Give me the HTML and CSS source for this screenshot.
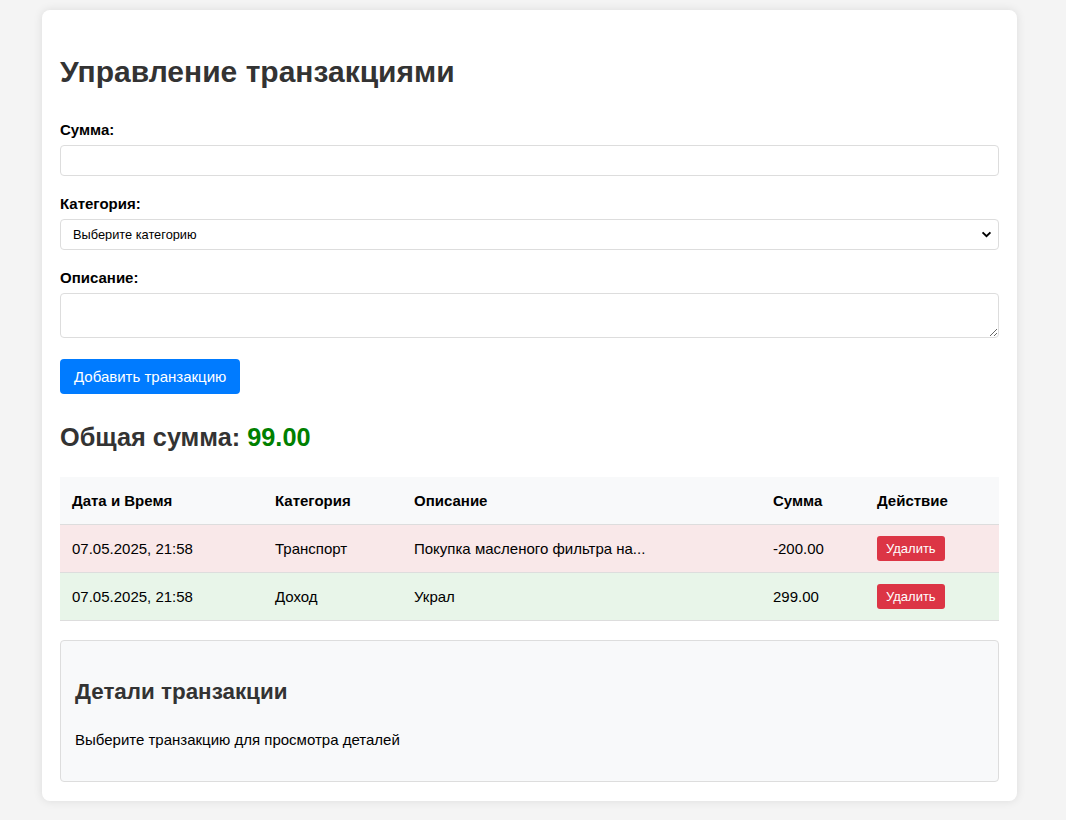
FILE: index.html
```html
<!DOCTYPE html>
<html lang="ru">
<head>
<meta charset="utf-8">
<title>Управление транзакциями</title>
<link rel="stylesheet" href="styles.css">
</head>
<body>
<div class="container">
  <h1 class="title">Управление транзакциями</h1>
  <form class="tx-form">
    <div class="form-group">
      <label class="label" for="amount">Сумма:</label>
      <input class="field" id="amount" type="text">
    </div>
    <div class="form-group">
      <label class="label" for="category">Категория:</label>
      <select class="field select" id="category">
        <option>Выберите категорию</option>
      </select>
    </div>
    <div class="form-group">
      <label class="label" for="desc">Описание:</label>
      <textarea class="field textarea" id="desc"></textarea>
    </div>
    <button class="btn-add" type="button">Добавить транзакцию</button>
  </form>

  <h2 class="total">Общая сумма: <span class="total-value">99.00</span></h2>

  <table class="tx-table">
    <thead>
      <tr>
        <th class="c-date">Дата и Время</th>
        <th class="c-cat">Категория</th>
        <th class="c-desc">Описание</th>
        <th class="c-sum">Сумма</th>
        <th class="c-act">Действие</th>
      </tr>
    </thead>
    <tbody>
      <tr class="row-expense">
        <td>07.05.2025, 21:58</td>
        <td>Транспорт</td>
        <td>Покупка масленого фильтра на...</td>
        <td>-200.00</td>
        <td><button class="btn-del" type="button">Удалить</button></td>
      </tr>
      <tr class="row-income">
        <td>07.05.2025, 21:58</td>
        <td>Доход</td>
        <td>Украл</td>
        <td>299.00</td>
        <td><button class="btn-del" type="button">Удалить</button></td>
      </tr>
    </tbody>
  </table>

  <div class="details">
    <h3 class="details-title">Детали транзакции</h3>
    <p class="details-text">Выберите транзакцию для просмотра деталей</p>
  </div>
</div>
</body>
</html>
```

FILE: styles.css
```css
html, body {
  margin: 0;
  padding: 0;
}
body {
  background: #f4f4f4;
  font-family: "Liberation Sans", Arial, sans-serif;
  font-size: 15px;
  color: #000;
}
.container {
  width: 975px;
  box-sizing: border-box;
  margin: 10px 0 19px 42px;
  padding: 18px 18px 19px;
  background: #fff;
  border-radius: 8px;
  box-shadow: 0 0 10px rgba(0, 0, 0, 0.1);
}
.title {
  color: #333;
  font-size: 30px;
  font-weight: bold;
  margin: 27px 0 32px;
  line-height: 34px;
}
.tx-form {
  margin: 0;
}
.form-group {
  margin-bottom: 19px;
}
.label {
  display: block;
  font-size: 15px;
  font-weight: bold;
  line-height: 17px;
  margin-bottom: 7px;
}
.field {
  display: block;
  width: 100%;
  box-sizing: border-box;
  padding: 8px;
  border: 1px solid #ddd;
  border-radius: 4px;
  font-family: "Liberation Sans", Arial, sans-serif;
  font-size: 12.8px;
  line-height: 13px;
  height: 31px;
  background: #fff;
  color: #000;
}
.select {
  padding: 0 12px;
  appearance: none;
  -webkit-appearance: none;
  background-image: url("data:image/svg+xml;utf8,<svg xmlns='http://www.w3.org/2000/svg' width='12' height='8' viewBox='0 0 12 8'><path d='M1.5 1.5 L6 6 L10.5 1.5' fill='none' stroke='black' stroke-width='2.2'/></svg>");
  background-repeat: no-repeat;
  background-position: right 6px center;
  background-size: 11px 7px;
}
.textarea {
  height: 45px;
  resize: vertical;
  margin-bottom: 21px;
}
.form-group:last-of-type {
  margin-bottom: 0;
}
.btn-add {
  display: block;
  background: #007bff;
  color: #fff;
  border: none;
  border-radius: 4px;
  padding: 0 14px;
  height: 35px;
  font-family: "Liberation Sans", Arial, sans-serif;
  font-size: 15px;
}
.total {
  color: #333;
  font-size: 25.3px;
  font-weight: bold;
  margin: 29px 0 25px;
  line-height: 29px;
}
.total-value {
  color: green;
}
.tx-table {
  width: 100%;
  border-collapse: collapse;
  font-size: 15px;
}
.tx-table th,
.tx-table td {
  text-align: left;
  padding: 0 12px;
  border-bottom: 1px solid #ddd;
  height: 47px;
}
.tx-table th {
  background: #f8f9fa;
  font-weight: bold;
}
.c-date { width: 179px; }
.c-cat { width: 115px; }
.c-desc { width: 335px; }
.c-sum { width: 80px; }
.row-expense td { background: #f9e8e9; }
.row-income td { background: #e8f5e9; }
.btn-del {
  background: #dc3545;
  color: #fff;
  border: none;
  border-radius: 3px;
  height: 25px;
  padding: 0 9px;
  font-family: "Liberation Sans", Arial, sans-serif;
  font-size: 13px;
}
.details {
  margin-top: 19px;
  background: #f8f9fa;
  border: 1px solid #ddd;
  border-radius: 4px;
  padding: 16px 14px 15px;
  height: 142px;
  box-sizing: border-box;
}
.details-title {
  color: #333;
  font-size: 22.4px;
  font-weight: bold;
  margin: 22px 0 26px;
  line-height: 26px;
}
.details-text {
  margin: 0;
  font-size: 15px;
  line-height: 18px;
}
```
